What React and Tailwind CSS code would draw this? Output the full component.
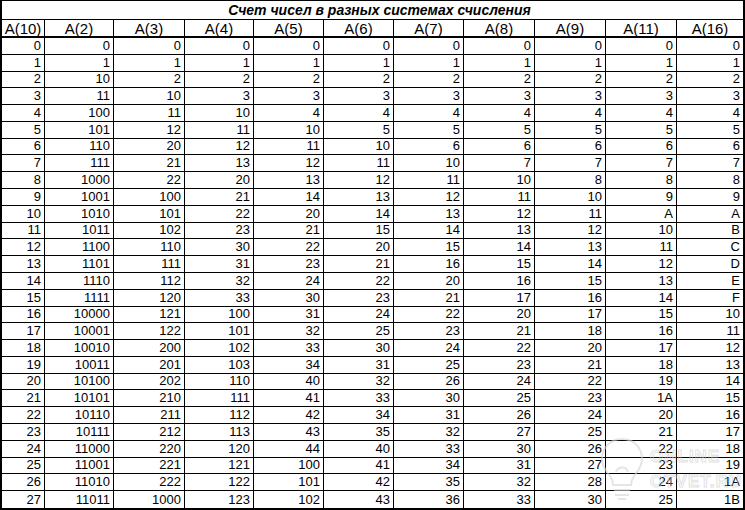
const bases = [2, 3, 4, 5, 6, 7, 8, 9, 11, 16];

const rows = Array.from({ length: 28 }, (_, n) => [
  String(n),
  ...bases.map((b) => n.toString(b).toUpperCase()),
]);

const headers = ['A(10)', ...bases.map((b) => `A(${b})`)];

// column widths include the 1px right border of each cell
const gridCols = 'grid grid-cols-[43px_69px_71px_69px_70px_70px_70px_71px_71px_71px_66px]';

const Watermark = () => (
  <div className="absolute left-[598px] top-[436px] flex items-center gap-1 pointer-events-none opacity-60">
    <svg width="48" height="66" viewBox="0 0 48 66" fill="none" stroke="#d4d4d4" strokeWidth="2">
      <path d="M24 3C12 3 4 12 4 23c0 8 5 13 8 17 2 3 3 6 3 9h18c0-3 1-6 3-9 3-4 8-9 8-17C44 12 36 3 24 3z" />
      <path d="M16 54h16M17 59h14M20 63h8" />
      <path d="M18 36c2-6 10-6 12 0" />
    </svg>
    <div className="flex flex-col leading-none font-bold text-transparent [-webkit-text-stroke:1px_#cfcfcf]">
      <span className="text-[17px] tracking-[1px]">ONLINE</span>
      <span className="text-[17px] tracking-[1px] mt-[8px]">OTVET.RU</span>
    </div>
  </div>
);

export default function App() {
  return (
    <div className="relative w-[745px] h-[510px] bg-white overflow-hidden text-black font-['Liberation_Sans',Arial,sans-serif]">
      <div className="w-[745px] h-[510px] border-t border-l-2 border-r-2 border-b-2 border-black flex flex-col">
        {/* Title */}
        <div className="h-[19px] shrink-0 border-b border-black flex items-center justify-center pl-[14px] text-[14px] font-bold italic leading-none">
          Счет чисел в разных системах счисления
        </div>

        {/* Column headers */}
        <div className={`${gridCols} h-[18px] shrink-0 border-b-2 border-black`}>
          {headers.map((h, i) => (
            <div
              key={h}
              className={`flex items-center justify-center text-[15px] leading-none ${i < headers.length - 1 ? 'border-r border-black' : ''}`}
            >
              {h}
            </div>
          ))}
        </div>

        {/* Data */}
        {rows.map((cells, r) => (
          <div
            key={r}
            className={`${gridCols} h-[16.786px] shrink-0 ${r < rows.length - 1 ? 'border-b border-black' : ''}`}
          >
            {cells.map((v, i) => (
              <div
                key={i}
                className={`flex items-end justify-end pr-[3px] pb-[2px] text-[13px] leading-none ${i < cells.length - 1 ? 'border-r border-black' : ''}`}
              >
                {v}
              </div>
            ))}
          </div>
        ))}
      </div>
      <Watermark />
    </div>
  );
}
